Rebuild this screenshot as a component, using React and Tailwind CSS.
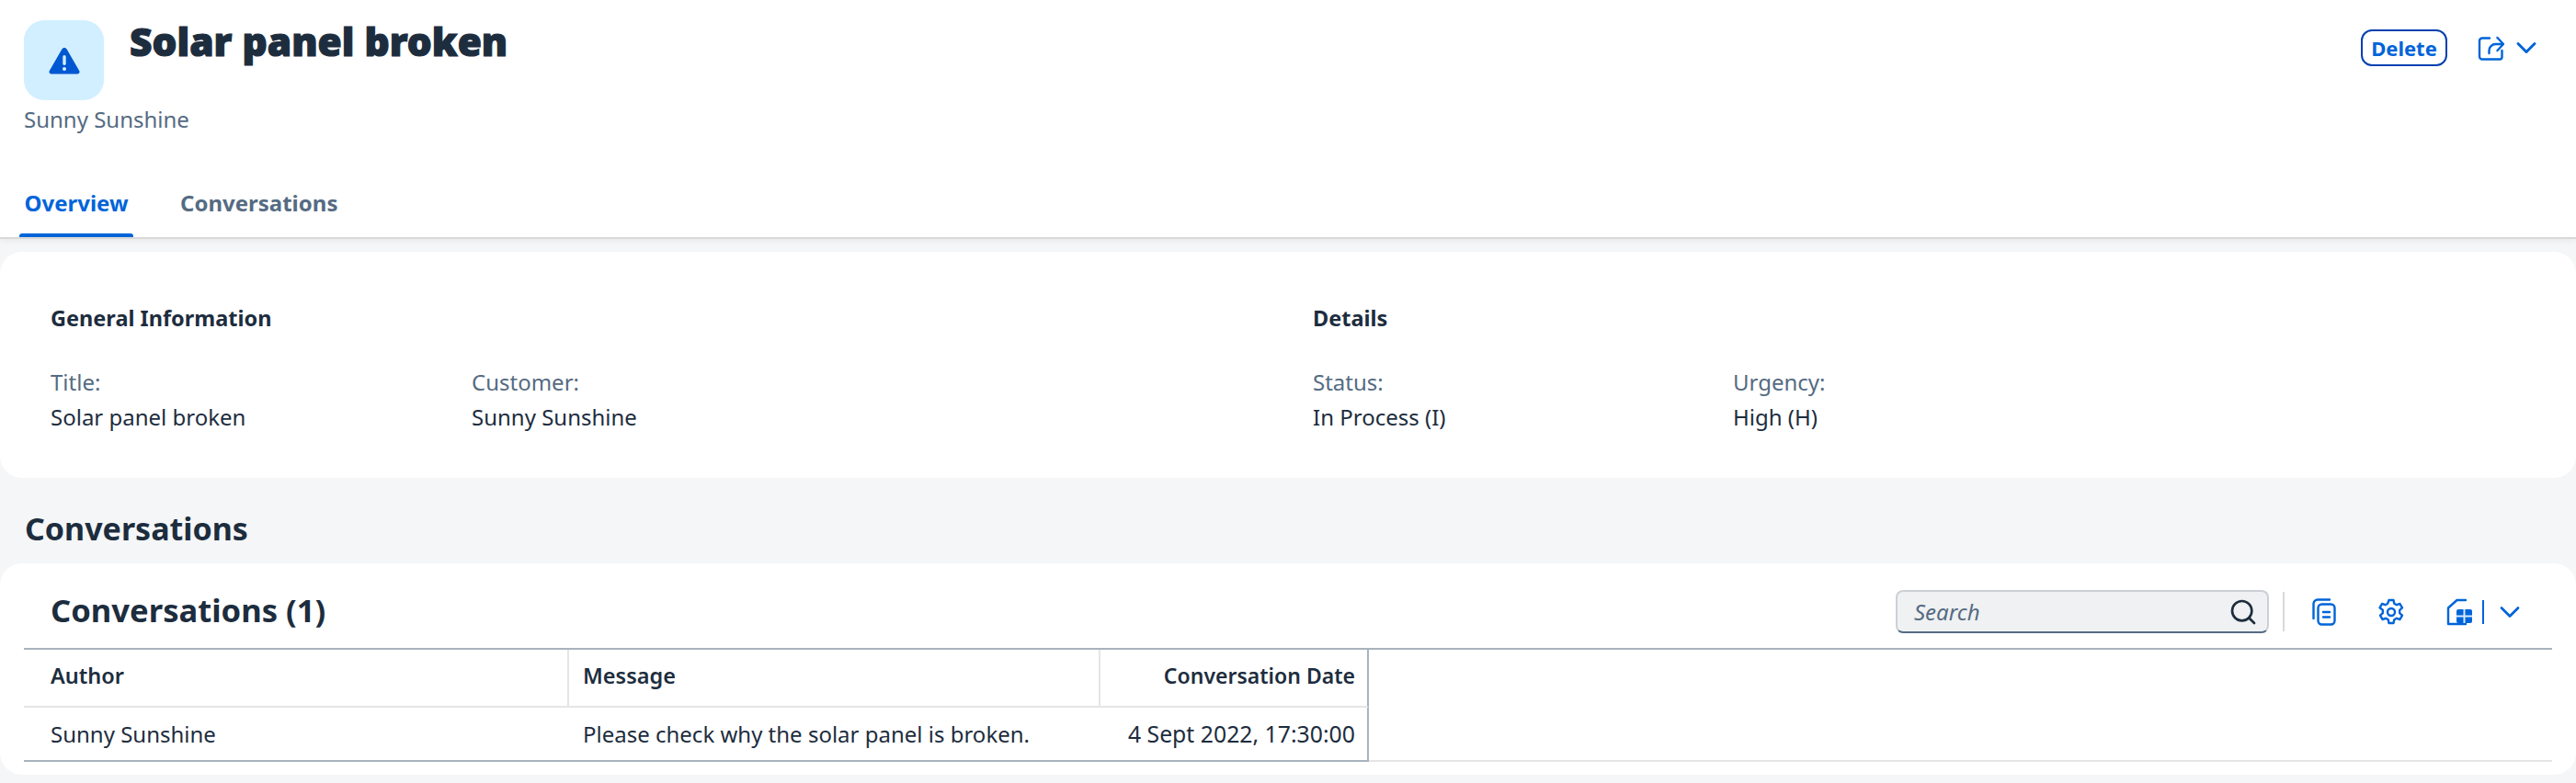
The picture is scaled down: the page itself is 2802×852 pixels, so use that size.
import React from "react";
import { ChevronDown, Search } from "lucide-react";

const font = "font-['Noto_Sans','Liberation_Sans',sans-serif]";

const WarningIcon = () => (
  <svg width="34" height="30" viewBox="0 0 34 30">
    <path
      d="M17 1c1.2 0 2.2.6 2.8 1.7l13.4 23.4c.9 1.6-.1 3.4-1.9 3.4H2.700C.9 29.500-.1 27.700.8 26.100L14.200 2.700C14.800 1.600 15.800 1 17 1z"
      fill="#0057d2"
    />
    <rect x="15.300" y="9" width="3.400" height="11" rx="1.700" fill="#d1efff" />
    <circle cx="17" cy="24" r="2" fill="#d1efff" />
  </svg>
);

const ShareIcon = () => (
  <svg width="29" height="29" viewBox="0 0 29 29" fill="none" stroke="#0064d9" strokeWidth="2.400" strokeLinecap="round" strokeLinejoin="round">
    <path d="M13 3.500H5a3 3 0 0 0-3 3v17a3 3 0 0 0 3 3h19a2.500 2.500 0 0 0 2.500-2.500v-7" />
    <path d="M12.500 20v-3a7 7 0 0 1 7-7h8" />
    <path d="M21.500 3l6.500 7-6.500 7" />
  </svg>
);

const CopyIcon = () => (
  <svg width="26" height="30" viewBox="0 0 26 30" fill="none" stroke="#0064d9" strokeWidth="2.400" strokeLinecap="round">
    <path d="M19 1.500H6a4.500 4.500 0 0 0-4.500 4.500v16" />
    <rect x="6.500" y="6.500" width="18" height="22" rx="4" />
    <path d="M12 15h7M12 20.500h7" />
  </svg>
);

const GearIcon = () => (
  <svg width="28" height="30" viewBox="0 0 28 30" fill="none" stroke="#0064d9" strokeWidth="2.400" strokeLinejoin="round">
    <path d="M11.500 2h5l.8 3.700 2.600 1.500 3.600-1.200 2.500 4.300-2.800 2.500v3.400l2.800 2.500-2.500 4.300-3.600-1.200-2.600 1.500-.8 3.700h-5l-.8-3.700-2.600-1.500-3.600 1.200-2.500-4.300 2.800-2.500v-3.400L1.500 10.300 4 6l3.600 1.200 2.600-1.500z" />
    <circle cx="14" cy="15" r="4" />
  </svg>
);

const TableIcon = () => (
  <svg width="28" height="30" viewBox="0 0 28 30" fill="none">
    <path d="M21 2h-9.500L2 10.500V28h19" stroke="#0064d9" strokeWidth="2.400" strokeLinecap="round" strokeLinejoin="round" />
    <rect x="11" y="12" width="17" height="15" rx="2" fill="#0064d9" />
    <path d="M19.500 12v15M11 19.500h17" stroke="#d8e8fb" strokeWidth="2" />
  </svg>
);

const Field = ({ label, value, className }) => (
  <div className={className}>
    <div className="text-[24px] leading-[32px] text-[#556b82]">{label}</div>
    <div className="mt-[6px] text-[24px] leading-[32px] text-[#1d2d3e]">{value}</div>
  </div>
);

export default function App() {
  return (
    <div className={`${font} h-[852px] w-full overflow-hidden bg-[#f5f6f7] text-[#1d2d3e]`}>
      {/* object page header */}
      <header className="h-[260px] border-b-2 border-[#d9d9d9] bg-white shadow-[0_2px_6px_rgba(0,0,0,0.06)]">
        <div className="flex items-start justify-between pt-[22px] pl-[26px] pr-[36px]">
          <div>
            <div className="flex items-start">
              <div className="flex h-[87px] w-[87px] items-center justify-center rounded-[22px] bg-[#d1efff]">
                <WarningIcon />
              </div>
              <h1 className="ml-[28px] text-[42.400px] leading-[46px] font-black text-[#1d2d3e] [-webkit-text-stroke:1.200px_#1d2d3e]">Solar panel broken</h1>
            </div>
            <div className="mt-[5px] text-[24px] leading-[32px] text-[#556b82]">Sunny Sunshine</div>
          </div>
          <div className="flex items-center pt-[10px]">
            <button className="flex h-[40px] w-[94px] items-center justify-center rounded-[12px] border-[2.500px] border-[#0040b0] text-[22px] font-bold text-[#0064d9]">
              Delete
            </button>
            <div className="ml-[33px] flex items-center">
              <ShareIcon />
              <ChevronDown size={36} strokeWidth={2} color="#0064d9" className="ml-[6px]" />
            </div>
          </div>
        </div>
        <nav className="mt-[57px] flex pl-[21px]">
          <div className="h-[55px] w-[124px]">
            <div className="h-[51px] text-center text-[24px] leading-[36px] font-bold text-[#0064d9]">Overview</div>
            <div className="h-[4px] rounded-t-[3px] bg-[#0064d9]" />
          </div>
          <div className="ml-[51px] text-[24px] leading-[36px] font-bold text-[#556b82]">Conversations</div>
        </nav>
      </header>

      {/* general info */}
      <section className="mt-[14px] flex h-[246px] rounded-[24px] bg-white pt-[56px]">
        <div className="w-[1428px] pl-[55px]">
          <h3 className="text-[23.5px] leading-[32px] font-bold">General Information</h3>
          <div className="mt-[38px] flex">
            <Field label="Title:" value="Solar panel broken" className="w-[458px]" />
            <Field label="Customer:" value="Sunny Sunshine" />
          </div>
        </div>
        <div className="flex-1">
          <h3 className="text-[23.5px] leading-[32px] font-bold">Details</h3>
          <div className="mt-[38px] flex">
            <Field label="Status:" value="In Process (I)" className="w-[457px]" />
            <Field label="Urgency:" value="High (H)" />
          </div>
        </div>
      </section>

      <h2 className="mt-[33px] ml-[27px] text-[34px] leading-[44px] font-bold">Conversations</h2>

      {/* table card */}
      <section className="mt-[16px] h-[230px] rounded-[24px] bg-white px-[26px]">
        <div className="flex h-[94px] items-center justify-between border-b-2 border-[#a8b3bd] pt-[10px]">
          <div className="pl-[29px] text-[34.600px] font-bold">Conversations (1)</div>
          <div className="mt-[3px] flex items-center pr-[28px]">
            <div className="flex h-[47px] w-[406px] items-center justify-between rounded-[8px] border-2 border-[#ccd0d6] border-b-[#556b82] bg-[#eff1f2] pr-[10px] pl-[18px]">
              <span className="text-[24px] text-[#556b82] italic">Search</span>
              <Search size={32} strokeWidth={2} color="#1d2d3e" />
            </div>
            <div className="mr-[30px] ml-[15px] h-[43px] w-[2px] bg-[#d9d9d9]" />
            <CopyIcon />
            <div className="ml-[46px]"><GearIcon /></div>
            <div className="ml-[46px]"><TableIcon /></div>
            <div className="ml-[11px] h-[26px] w-[2px] bg-[#0064d9]" />
            <ChevronDown size={36} strokeWidth={1.800} color="#0064d9" className="ml-[10px]" />
          </div>
        </div>
        <div className="grid h-[122px] grid-cols-[593px_578px_292px_1fr] grid-rows-[63px_59px]">
          <div className="border-r-2 border-b-2 border-[#e5e5e5] pl-[29px] text-[23.500px] leading-[56px] font-semibold">Author</div>
          <div className="border-r-2 border-b-2 border-[#e5e5e5] pl-[15px] text-[23.500px] leading-[56px] font-semibold">Message</div>
          <div className="border-r-2 border-b-2 border-r-[#a8b3bd] border-b-[#e5e5e5] pr-[13px] text-right text-[23px] leading-[56px] font-semibold">Conversation Date</div>
          <div />
          <div className="border-b-2 border-[#a8b3bd] pl-[29px] text-[24px] leading-[57px]">Sunny Sunshine</div>
          <div className="border-b-2 border-[#a8b3bd] pl-[15px] text-[24px] leading-[57px]">Please check why the solar panel is broken.</div>
          <div className="border-r-2 border-b-2 border-r-[#a8b3bd] border-b-[#a8b3bd] pr-[13px] text-right text-[24.800px] leading-[57px] whitespace-nowrap">4 Sept 2022, 17:30:00</div>
          <div className="border-b-2 border-[#e5e5e5]" />
        </div>
      </section>
    </div>
  );
}
